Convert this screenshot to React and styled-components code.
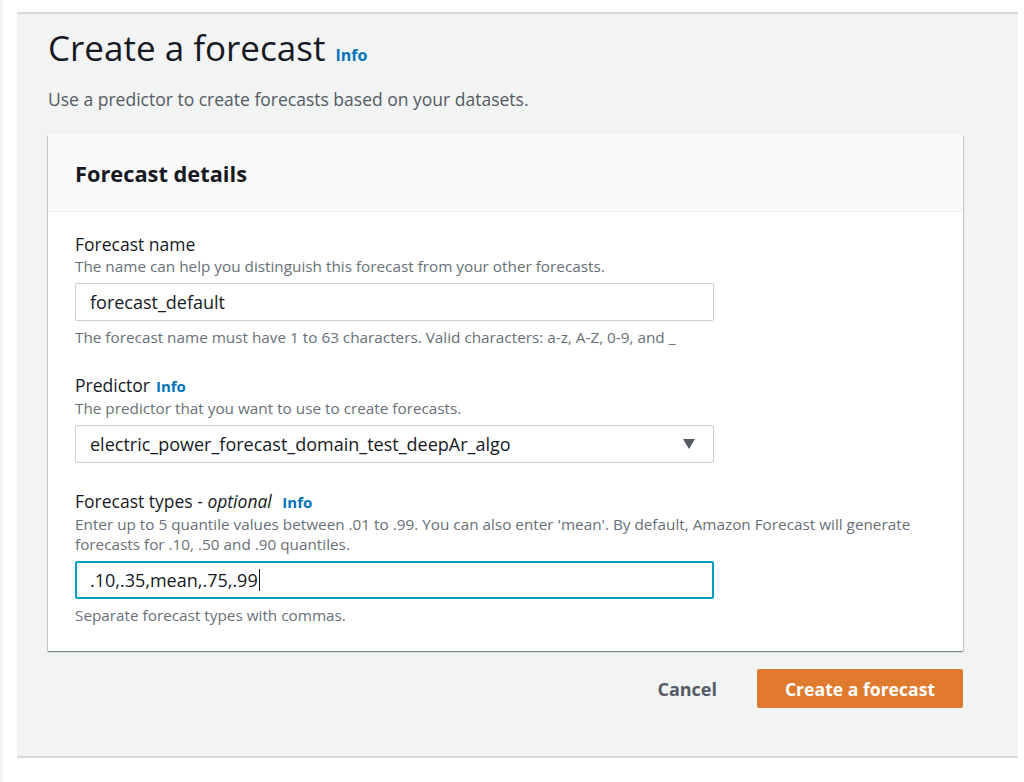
import styled, { createGlobalStyle } from 'styled-components'

const GlobalStyle = createGlobalStyle`
	body {
		margin: 0;
		background: #ffffff;
		font-family: 'Open Sans', 'Noto Sans', sans-serif;
		color: #16191f;
	}
`

const Field = ({ label, optional, info, hint, children, note }) => {
	return (
		<FieldBox>
			<Label>
				{label}
				{optional && (
					<>
						{' - '}
						<em>optional</em>{' '}
					</>
				)}
				{info && <InfoLink $size="15px" $gap="6px">Info</InfoLink>}
			</Label>
			{hint && <Hint>{hint}</Hint>}
			{children}
			{note && <Note>{note}</Note>}
		</FieldBox>
	)
}

export default function App() {
	return (
		<Page>
			<GlobalStyle />
			<Panel>
				<Title>
					Create a forecast
					<InfoLink $size="16px" $gap="10px">Info</InfoLink>
				</Title>
				<Subtitle>Use a predictor to create forecasts based on your datasets.</Subtitle>

				<Card>
					<CardHeader>Forecast details</CardHeader>
					<CardBody>
						<Field
							label="Forecast name"
							hint="The name can help you distinguish this forecast from your other forecasts."
							note="The forecast name must have 1 to 63 characters. Valid characters: a-z, A-Z, 0-9, and _"
						>
							<TextBox>forecast_default</TextBox>
						</Field>

						<Field
							label="Predictor"
							info
							hint="The predictor that you want to use to create forecasts."
						>
							<TextBox>
								electric_power_forecast_domain_test_deepAr_algo
								<Caret viewBox="0 0 12 10">
									<path d="M0 0 L12 0 L6 10 Z" fill="#545b64" />
								</Caret>
							</TextBox>
						</Field>

						<Field
							label="Forecast types"
							optional
							info
							hint="Enter up to 5 quantile values between .01 to .99. You can also enter 'mean'. By default, Amazon Forecast will generate forecasts for .10, .50 and .90 quantiles."
							note="Separate forecast types with commas."
						>
							<TextBox $focused>
								.10,.35,mean,.75,.99
								<Cursor />
							</TextBox>
						</Field>
					</CardBody>
				</Card>

				<Actions>
					<LinkButton>Cancel</LinkButton>
					<PrimaryButton>Create a forecast</PrimaryButton>
				</Actions>
			</Panel>
		</Page>
	)
}

const Page = styled.div`
	min-height: 782px;
	padding-top: 12px;
	box-sizing: border-box;
	border-left: 3px solid #f2f3f3;
`

const Panel = styled.div`
	margin-left: 14px;
	width: 1001px;
	height: 746px;
	box-sizing: border-box;
	background: #f2f3f3;
	border-top: 2px solid #d5dbdb;
	border-bottom: 2px solid #d5dbdb;
	padding: 13px 0 0 31px;
`

const Title = styled.h1`
	margin: 0;
	font-size: 35px;
	font-weight: 400;
	line-height: 42px;
	color: #16191f;
	display: flex;
	align-items: baseline;
`

const InfoLink = styled.a`
	margin-left: ${(p) => p.$gap};
	font-size: ${(p) => p.$size};
	font-weight: 700;
	font-style: normal;
	color: #0073bb;
	cursor: pointer;
`

const Subtitle = styled.p`
	margin: 11px 0 0;
	font-size: 17.5px;
	line-height: 24px;
	color: #545b64;
`

const Card = styled.div`
	margin-top: 24px;
	width: 915px;
	background: #ffffff;
	box-shadow: 0 1px 1px 0 rgba(0, 28, 36, 0.3), 1px 1px 1px 0 rgba(0, 28, 36, 0.15),
		-1px 1px 1px 0 rgba(0, 28, 36, 0.15);
`

const CardHeader = styled.h2`
	margin: 0;
	height: 77px;
	box-sizing: border-box;
	padding: 0 27px;
	display: flex;
	align-items: center;
	background: #fafafa;
	border-bottom: 1px solid #eaeded;
	font-size: 21.8px;
	font-weight: 700;
	color: #16191f;
`

const CardBody = styled.div`
	padding: 20px 27px 26px;
	display: flex;
	flex-direction: column;
	gap: 26px;
`

const FieldBox = styled.div`
	display: flex;
	flex-direction: column;
	width: 860px;
`

const Label = styled.div`
	font-size: 17.5px;
	line-height: 24px;
	color: #16191f;

	em {
		font-style: italic;
	}
`

const Hint = styled.div`
	font-size: 15.3px;
	line-height: 20px;
	color: #687078;
`

const Note = styled.div`
	margin-top: 6px;
	font-size: 15.3px;
	line-height: 20px;
	color: #687078;
`

const TextBox = styled.div`
	margin-top: 7px;
	width: 639px;
	height: 38px;
	box-sizing: border-box;
	display: flex;
	align-items: center;
	justify-content: ${(p) => (p.$focused ? 'flex-start' : 'space-between')};
	padding: 0 ${(p) => (p.$focused ? '13px' : '14px')};
	border: ${(p) => (p.$focused ? '2px solid #00a1c9' : '1px solid #c9cfcf')};
	border-radius: 2px;
	background: #ffffff;
	font-size: 18px;
	color: #16191f;
`

const Caret = styled.svg`
	width: 12px;
	height: 10px;
	margin-right: 4px;
`

const Cursor = styled.span`
	display: inline-block;
	width: 1px;
	height: 22px;
	margin-left: 1px;
	background: #16191f;
`

const Actions = styled.div`
	width: 915px;
	margin-top: 18px;
	display: flex;
	justify-content: flex-end;
	align-items: center;
	gap: 40px;
`

const LinkButton = styled.button`
	border: none;
	background: none;
	padding: 0;
	font-family: inherit;
	font-size: 18px;
	font-weight: 700;
	color: #545b64;
	cursor: pointer;
`

const PrimaryButton = styled.button`
	width: 206px;
	height: 39px;
	border: none;
	border-radius: 2px;
	background: #e07a2e;
	font-family: inherit;
	font-size: 17.6px;
	font-weight: 700;
	color: #ffffff;
	cursor: pointer;
`
